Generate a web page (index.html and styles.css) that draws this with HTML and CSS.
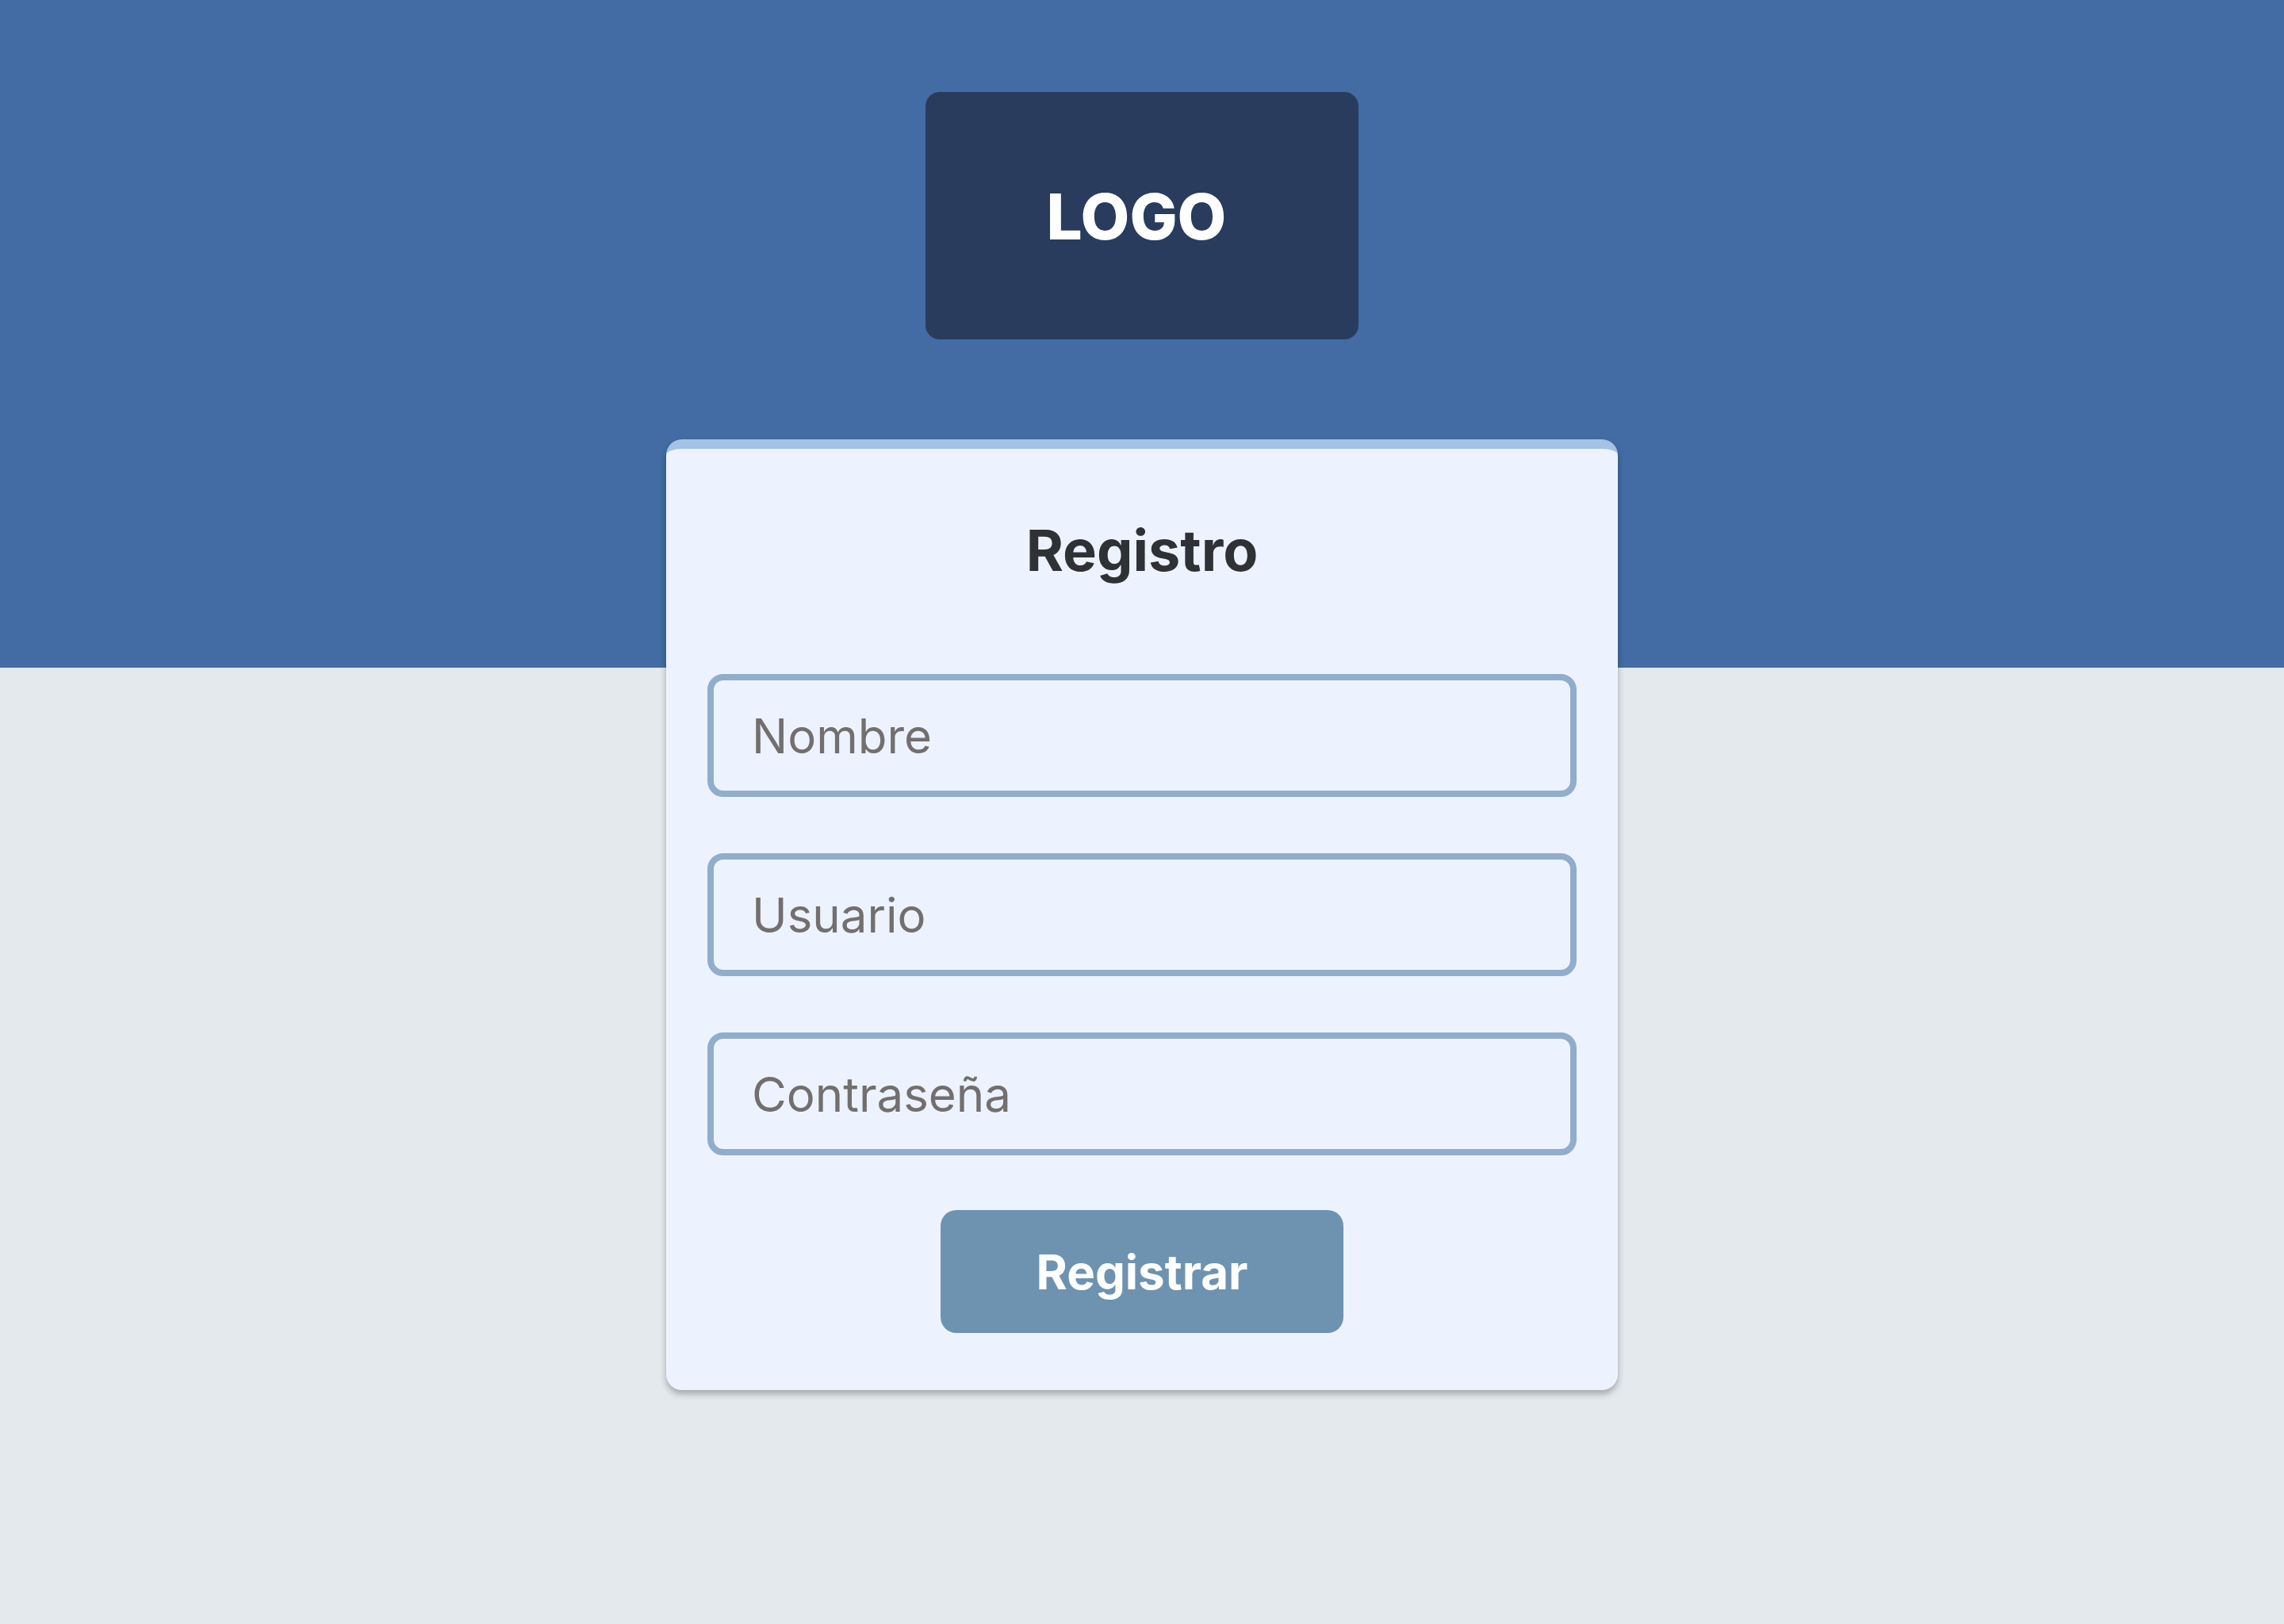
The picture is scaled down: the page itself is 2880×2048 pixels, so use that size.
FILE: index.html
```html
<!DOCTYPE html>
<html lang="es">
<head>
<meta charset="utf-8">
<title>Registro</title>
<link rel="stylesheet" href="styles.css">
</head>
<body>
<main class="page">
  <div class="logo">LOGO</div>
  <form class="card">
    <h1 class="card-title">Registro</h1>
    <input class="field" type="text" placeholder="Nombre">
    <input class="field" type="text" placeholder="Usuario">
    <input class="field" type="password" placeholder="Contraseña">
    <button class="submit" type="button">Registrar</button>
  </form>
</main>
</body>
</html>
```

FILE: styles.css
```css
html, body {
  margin: 0;
  padding: 0;
}

body {
  min-height: 2048px;
  background: linear-gradient(to bottom, #426ca3 0, #426ca3 842px, #e4e9ed 842px, #e4e9ed 100%);
  font-family: Inter, "Noto Sans", "Liberation Sans", sans-serif;
}

.page {
  display: flex;
  flex-direction: column;
  align-items: center;
  padding-top: 116px;
}

.logo {
  width: 546px;
  height: 312px;
  box-sizing: border-box;
  background: #293c5d;
  border-radius: 18px;
  display: flex;
  align-items: center;
  justify-content: center;
  color: #ffffff;
  font-weight: 800;
  font-size: 80px;
  padding-right: 14px;
}

.card {
  margin-top: 126px;
  width: 1200px;
  box-sizing: border-box;
  background: #edf3fe;
  border-top: 12px solid #a3c2e5;
  border-radius: 20px;
  box-shadow: 0 5px 8px rgba(0, 0, 0, 0.28);
  padding: 84px 52px 72px;
  display: flex;
  flex-direction: column;
  align-items: center;
}

.card-title {
  margin: 0 0 112px;
  font-size: 72px;
  line-height: 88px;
  font-weight: 700;
  color: #2e3136;
}

.field {
  display: block;
  width: 100%;
  height: 155px;
  box-sizing: border-box;
  margin: 0 0 71px;
  padding: 0 48px;
  border: 8px solid #91adcc;
  border-radius: 20px;
  background: #edf3fe;
  font-family: Inter, "Noto Sans", "Liberation Sans", sans-serif;
  font-size: 60px;
  color: #3a3a3a;
  outline: none;
}

.field:last-of-type {
  margin-bottom: 69px;
}

.field::placeholder {
  color: #736f6f;
  opacity: 1;
}

.submit {
  width: 508px;
  height: 155px;
  border: none;
  border-radius: 20px;
  background: #6e93b0;
  color: #ffffff;
  font-family: Inter, "Noto Sans", "Liberation Sans", sans-serif;
  font-size: 60px;
  font-weight: 700;
  cursor: pointer;
}
```
